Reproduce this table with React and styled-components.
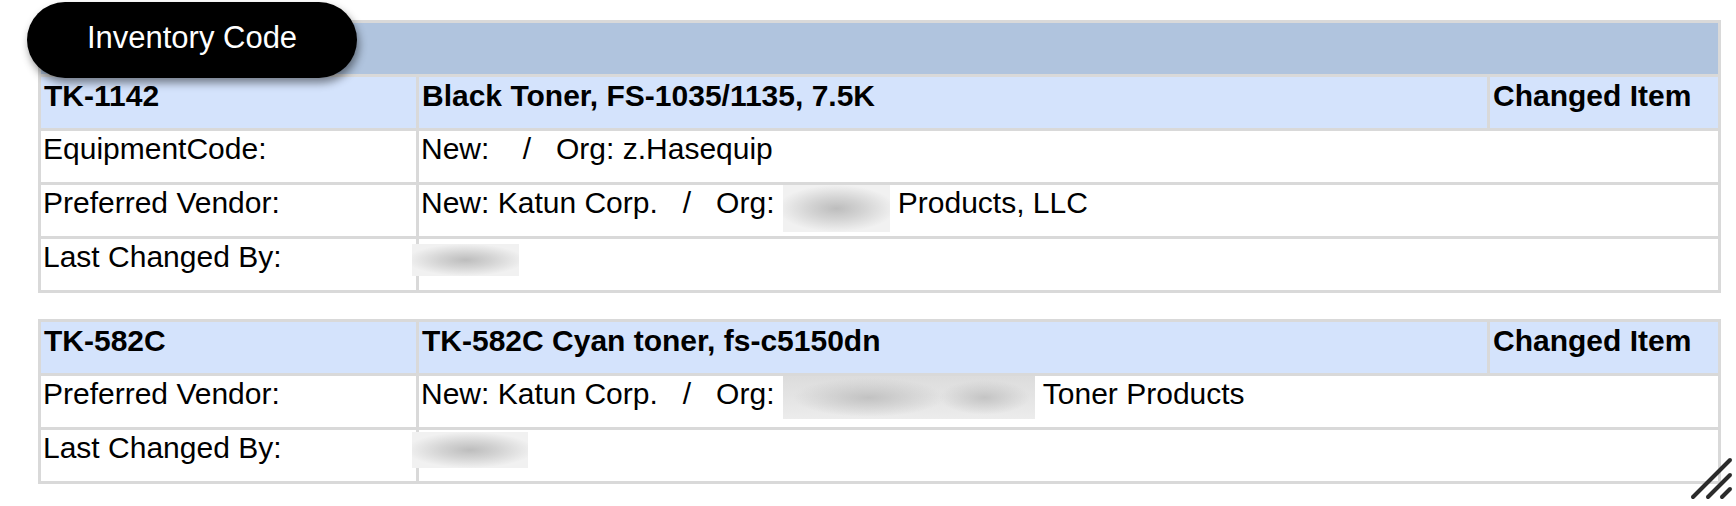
import React from "react";
import styled, { createGlobalStyle } from "styled-components";

const GlobalStyle = createGlobalStyle`
  html, body {
    margin: 0;
    padding: 0;
    background: #fff;
  }
  body {
    font-family: "Liberation Sans", Arial, sans-serif;
    color: #000;
  }
`;

const Page = styled.div`
  position: relative;
  width: 1736px;
  height: 506px;
  box-sizing: border-box;
  padding: 20px 0 0 38px;
  display: flex;
  flex-direction: column;
  gap: 26px;
  overflow: hidden;
`;

const Grid = styled.div`
  display: grid;
  grid-template-columns: 375px 1068px 228px;
  grid-auto-rows: 51px;
  gap: 3px;
  padding: 3px;
  width: max-content;
  background: #d9d9d9;
  font-size: 30px;
  line-height: 34px;
`;

const Band = styled.div`
  grid-column: 1 / 4;
  background: #b0c4de;
`;

const HeadCell = styled.div`
  background: #d4e3fc;
  font-weight: bold;
  padding: 2px 3px 0;
  white-space: nowrap;
`;

const LabelCell = styled.div`
  background: #fff;
  padding: 1px 2px 0;
  white-space: nowrap;
`;

const ValueCell = styled.div`
  grid-column: 2 / 4;
  background: #fff;
  padding: 1px 2px 0;
  white-space: nowrap;
  display: flex;
  align-items: flex-start;
`;

const Blob = styled.span`
  display: inline-block;
  flex-shrink: 0;
  width: ${(p) => p.$w}px;
  height: ${(p) => p.$h}px;
  margin: ${(p) => p.$top || 0}px 8px 0 ${(p) => p.$shift || 0}px;
  background: ${(p) =>
    p.$double
      ? "radial-gradient(ellipse 30% 45% at 34% 50%, #c2c2c2 0%, rgba(210,210,210,0) 100%), radial-gradient(ellipse 18% 40% at 80% 50%, #c4c4c4 0%, rgba(210,210,210,0) 100%), linear-gradient(#dcdcdc, #ececec)"
      : "radial-gradient(ellipse 55% 50% at 50% 50%, #bdbdbd 0%, #d3d3d3 45%, #e9e9e9 85%, #f1f1f1 100%)"};
  position: relative;
  z-index: 1;
`;

const Pill = styled.div`
  position: absolute;
  left: 27px;
  top: 2px;
  width: 330px;
  height: 76px;
  border-radius: 38px;
  background: #000;
  color: #fff;
  font-size: 31px;
  display: flex;
  align-items: center;
  justify-content: center;
  padding-bottom: 5px;
  box-sizing: border-box;
  box-shadow: 2px 5px 8px rgba(0, 0, 0, 0.45);
  z-index: 5;
`;

const Grip = styled.svg`
  position: absolute;
  left: 1688px;
  top: 456px;
  width: 46px;
  height: 46px;
`;

const sep = "\u00a0\u00a0\u00a0/\u00a0\u00a0\u00a0";

const items = [
  {
    code: "TK-1142",
    desc: "Black Toner, FS-1035/1135, 7.5K",
    band: true,
    rows: [
      { label: "EquipmentCode:", value: <span>{`New:\u00a0${sep}Org: z.Hasequip`}</span> },
      {
        label: "Preferred Vendor:",
        value: (
          <>
            <span>{`New: Katun Corp.${sep}Org:\u00a0`}</span>
            <Blob $w={107} $h={47} $top={-1} />
            <span>Products, LLC</span>
          </>
        ),
      },
      { label: "Last Changed By:", value: <Blob $w={107} $h={32} $top={4} $shift={-9} /> },
    ],
  },
  {
    code: "TK-582C",
    desc: "TK-582C Cyan toner, fs-c5150dn",
    rows: [
      {
        label: "Preferred Vendor:",
        value: (
          <>
            <span>{`New: Katun Corp.${sep}Org:\u00a0`}</span>
            <Blob $w={252} $h={43} $top={-1} $double />
            <span>Toner Products</span>
          </>
        ),
      },
      { label: "Last Changed By:", value: <Blob $w={116} $h={36} $top={1} $shift={-9} /> },
    ],
  },
];

export default function App() {
  return (
    <>
      <GlobalStyle />
      <Page>
        <Pill>Inventory Code</Pill>
        {items.map((item) => (
          <Grid key={item.code}>
            {item.band && <Band />}
            <HeadCell>{item.code}</HeadCell>
            <HeadCell>{item.desc}</HeadCell>
            <HeadCell>Changed Item</HeadCell>
            {item.rows.map((r) => (
              <React.Fragment key={r.label}>
                <LabelCell>{r.label}</LabelCell>
                <ValueCell>{r.value}</ValueCell>
              </React.Fragment>
            ))}
          </Grid>
        ))}
        <Grip viewBox="0 0 46 46">
          <g stroke="#2b2b2b" strokeWidth="4" strokeLinecap="round">
            <line x1="5" y1="41" x2="42" y2="4" />
            <line x1="20" y1="41" x2="42" y2="19" />
            <line x1="34" y1="41" x2="42" y2="33" />
          </g>
        </Grip>
      </Page>
    </>
  );
}
